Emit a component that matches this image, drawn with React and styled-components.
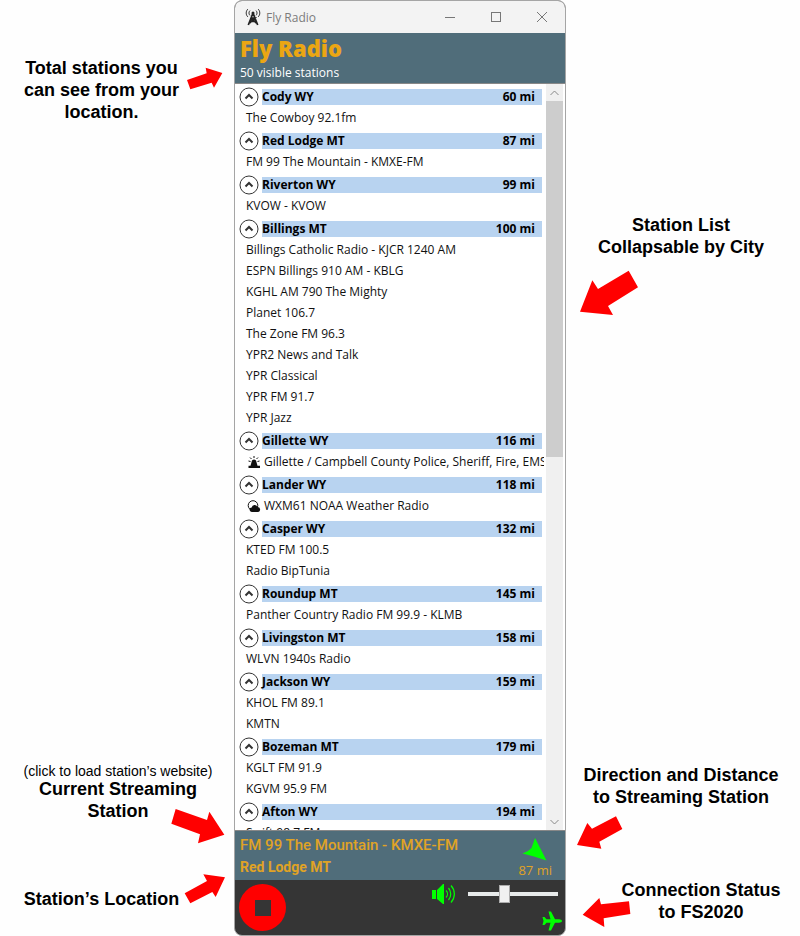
import { useState } from "react";
import styled, { createGlobalStyle } from "styled-components";

const cities = [
    { name: "Cody WY", distance: 60, stations: [{ name: "The Cowboy 92.1fm" }] },
    { name: "Red Lodge MT", distance: 87, stations: [{ name: "FM 99 The Mountain - KMXE-FM" }] },
    { name: "Riverton WY", distance: 99, stations: [{ name: "KVOW - KVOW" }] },
    {
        name: "Billings MT",
        distance: 100,
        stations: [
            { name: "Billings Catholic Radio - KJCR 1240 AM" },
            { name: "ESPN Billings 910 AM - KBLG" },
            { name: "KGHL AM 790 The Mighty" },
            { name: "Planet 106.7" },
            { name: "The Zone FM 96.3" },
            { name: "YPR2 News and Talk" },
            { name: "YPR Classical" },
            { name: "YPR FM 91.7" },
            { name: "YPR Jazz" },
        ],
    },
    {
        name: "Gillette WY",
        distance: 116,
        stations: [{ name: "Gillette / Campbell County Police, Sheriff, Fire, EMS &", icon: "siren" }],
    },
    { name: "Lander WY", distance: 118, stations: [{ name: "WXM61 NOAA Weather Radio", icon: "weather" }] },
    { name: "Casper WY", distance: 132, stations: [{ name: "KTED FM 100.5" }, { name: "Radio BipTunia" }] },
    { name: "Roundup MT", distance: 145, stations: [{ name: "Panther Country Radio FM 99.9 - KLMB" }] },
    { name: "Livingston MT", distance: 158, stations: [{ name: "WLVN 1940s Radio" }] },
    { name: "Jackson WY", distance: 159, stations: [{ name: "KHOL FM 89.1" }, { name: "KMTN" }] },
    { name: "Bozeman MT", distance: 179, stations: [{ name: "KGLT FM 91.9" }, { name: "KGVM 95.9 FM" }] },
    { name: "Afton WY", distance: 194, stations: [{ name: "Swift 98.7 FM" }] },
];

const TowerIcon = () => (
    <svg width="16" height="18" viewBox="0 0 16 18" fill="none" stroke="#222">
        <path d="M3 1C.6 3 .6 7 3 9M5 2.600C3.600 4 3.600 6 5 7.400M13 1c2.400 2 2.400 6 0 8M11 2.600c1.400 1.400 1.400 3.400 0 4.800" strokeWidth="0.9" />
        <circle cx="8" cy="5" r="1.500" fill="#222" stroke="none" />
        <path d="M8 5L3.300 17M8 5l4.700 12M6 10h4l-5.500 5M6 10l5.500 5M5 13.500h6" strokeWidth="1.700" />
    </svg>
);

const SirenIcon = () => (
    <svg width="14" height="14" viewBox="0 0 14 14" fill="#111">
        <path d="M3.500 10.800L5 5.500Q7 3.600 9 5.500l1.500 5.300zM1.500 10.800h11.500V13H1.500z" />
        <path d="M7 1v2M3 2.500l1.500 1.500M11 2.500L9.500 4M1.500 6l2 .5M12.500 6l-2 .5" stroke="#111" />
    </svg>
);

const WeatherIcon = () => (
    <svg width="14" height="14" viewBox="0 0 14 14">
        <circle cx="6" cy="6.500" r="4.800" fill="#fff" stroke="#111" />
        <path
            d="M5 13a2.300 2.300 0 0 1-.3-4.600 3 3 0 0 1 5.700-.5A2.600 2.600 0 0 1 11.200 13z"
            fill="#111"
        />
    </svg>
);

const stationIcons = { siren: SirenIcon, weather: WeatherIcon };

const Arrow = ({ viewBox, points, ...rest }) => {
    const [, , w, h] = viewBox.split(" ").map(Number);
    return (
        <ArrowSvg width={w / 3} height={h / 3} viewBox={viewBox} aria-hidden="true" {...rest}>
            <polygon points={points} fill="#f00" />
        </ArrowSvg>
    );
};

const City = ({ city }) => {
    const [open, setOpen] = useState(true);
    return (
        <section>
            <CityHeader>
                <Toggle
                    type="button"
                    aria-expanded={open}
                    aria-label={"Toggle " + city.name}
                    onClick={() => setOpen(!open)}
                >
                    <svg width="20" height="20" viewBox="0 0 20 20" fill="none" stroke="#333">
                        <circle cx="10" cy="10" r="9" />
                        <path d={open ? "M6.500 11.500L10 8l3.500 3.500" : "M6.500 8.500L10 12l3.500-3.500"} strokeWidth="2" />
                    </svg>
                </Toggle>
                <CityBar>
                    <span>{city.name}</span>
                    <span>{city.distance} mi</span>
                </CityBar>
            </CityHeader>
            {open && (
                <Stations>
                    {city.stations.map((station) => {
                        const Icon = stationIcons[station.icon];
                        return (
                            <Station key={station.name}>
                                {Icon && <Icon />}
                                {station.name}
                            </Station>
                        );
                    })}
                </Stations>
            )}
        </section>
    );
};

const App = () => {
    const [volume, setVolume] = useState(39);

    return (
        <Page>
            <GlobalStyle />
            <LeftNotes>
                <Callout>
                    <Note $align="start">
                        Total stations you
                        <br />
                        can see from your
                        <br />
                        location.
                    </Note>
                    <Arrow
                        $inset="10px 11px 0 0"
                        viewBox="561 81 108 69"
                        points="561,120 620,100 617,83 667,99 642,143 635,128 571,148"
                    />
                </Callout>
                <NoteGroup>
                    <Callout>
                        <Note $align="middle">
                            <Hint>(click to load station’s website)</Hint>
                            Current Streaming
                            <br />
                            Station
                        </Note>
                        <Arrow
                            $inset="45px 9px 0 0"
                            viewBox="513 171 162 105"
                            points="527,171 621,204 628,179 673,248 594,274 600,247 514,215"
                        />
                    </Callout>
                    <Callout>
                        <Note $align="start" $top={14}>
                            Station’s Location
                        </Note>
                        <Arrow
                            $inset="0 9px 0 0"
                            viewBox="552 372 123 90"
                            points="554,430 621,393 610,373 675,382 647,441 637,426 571,460"
                        />
                    </Callout>
                </NoteGroup>
            </LeftNotes>

            <Window>
                <TitleBar>
                    <TowerIcon />
                    <span>Fly Radio</span>
                    <WindowButton type="button" aria-label="Minimize">
                        <svg width="12" height="12" viewBox="0 0 12 12">
                            <path d="M1 6.500h10" />
                        </svg>
                    </WindowButton>
                    <WindowButton type="button" aria-label="Maximize">
                        <svg width="12" height="12" viewBox="0 0 12 12">
                            <rect x="1.500" y="1.500" width="9" height="9" />
                        </svg>
                    </WindowButton>
                    <WindowButton type="button" aria-label="Close">
                        <svg width="12" height="12" viewBox="0 0 12 12">
                            <path d="M1 1l10 10M11 1L1 11" />
                        </svg>
                    </WindowButton>
                </TitleBar>

                <Header>
                    <h1>Fly Radio</h1>
                    <p>50 visible stations</p>
                </Header>

                <ListArea>
                    <CityList>
                        {cities.map((city) => (
                            <City key={city.name} city={city} />
                        ))}
                    </CityList>
                    <ScrollBar>
                        <ScrollButton type="button" aria-label="Scroll up">
                            <svg width="9" height="6" viewBox="0 0 9 6">
                                <path d="M.5 5l4-4 4 4" />
                            </svg>
                        </ScrollButton>
                        <ScrollTrack>
                            <ScrollThumb />
                        </ScrollTrack>
                        <ScrollButton type="button" aria-label="Scroll down">
                            <svg width="9" height="6" viewBox="0 0 9 6">
                                <path d="M.5 1l4 4 4-4" />
                            </svg>
                        </ScrollButton>
                    </ScrollBar>
                </ListArea>

                <NowPlaying>
                    <div>
                        <StationLink href="#station">FM 99 The Mountain - KMXE-FM</StationLink>
                        <StationCity>Red Lodge MT</StationCity>
                    </div>
                    <Bearing>
                        <svg width="26" height="24" viewBox="0 0 26 24">
                            <path d="M13 0l11.500 22.500L12 18.500.5 15.500q5.500-1.500 9-5.500z" fill="#0f0" />
                        </svg>
                        87 mi
                    </Bearing>
                </NowPlaying>

                <Controls>
                    <StopButton type="button" aria-label="Stop" />
                    <Side>
                        <Volume>
                            <svg width="24" height="20" viewBox="0 0 24 20">
                                <path d="M0 6h4v9H0zM5 6l6-6h1v20h-1l-6-5z" fill="#0f0" />
                                <path
                                    d="M14 6.500c2 2 2 5 0 7M16.500 4c3 3.500 3 8.500 0 12M19 1.500c4.500 5 4.500 12 0 17"
                                    fill="none"
                                    stroke="#0f0"
                                    strokeWidth="1.200"
                                />
                            </svg>
                            <Slider
                                type="range"
                                aria-label="Volume"
                                value={volume}
                                onChange={(e) => setVolume(e.target.value)}
                            />
                        </Volume>
                        <svg width="20" height="20" viewBox="0 0 20 20" fill="#0f0" role="img" aria-label="Connected">
                            <path d="M20 10c0 1-1.500 1.700-3 1.700h-4L9 19.500H6.500L8.500 11.700H4.500L2.500 14H.5L1.500 10 .5 6h2l2 2.300h4L6.500.5H9l4 7.800h4c1.500 0 3 .7 3 1.700z" />
                        </svg>
                    </Side>
                </Controls>
            </Window>

            <RightNotes>
                <StackedCallout>
                    <Note>
                        Station List
                        <br />
                        Collapsable by City
                    </Note>
                    <Arrow
                        $inset="12px 0 0 14px"
                        viewBox="30 210 174 135"
                        points="176,212 204,262 114,318 129,345 30,335 67,241 84,267"
                    />
                </StackedCallout>
                <NoteGroup>
                    <StackedCallout>
                        <Note>
                            Direction and Distance
                            <br />
                            to Streaming Station
                        </Note>
                        <Arrow
                            $inset="8px 0 0 11px"
                            viewBox="21 201 138 99"
                            points="138,202 157,240 88,278 94,299 21,288 52,222 66,239"
                        />
                    </StackedCallout>
                    <Callout>
                        <Note $align="end">
                            Connection Status
                            <br />
                            to FS2020
                        </Note>
                        <Arrow
                            $left
                            $inset="19px 0 0 16px"
                            viewBox="36 444 147 87"
                            points="177,454 181,492 101,505 103,531 38,494 88,444 93,463"
                        />
                    </Callout>
                </NoteGroup>
            </RightNotes>
        </Page>
    );
};

const GlobalStyle = createGlobalStyle`
    * {
        box-sizing: border-box;
    }

    body {
        margin: 0;
        background: #fefefe;
        font-family: "Open Sans", "Noto Sans", sans-serif;
    }

    h1, p, ul {
        margin: 0;
        padding: 0;
    }

    button {
        display: grid;
        place-items: center;
        padding: 0;
        border: none;
        background: none;
    }

    svg {
        display: block;
        flex-shrink: 0;
    }
`;

const Page = styled.main`
    display: grid;
    grid-template-columns: 1fr 332px 1fr;
    height: 100vh;
`;

const Notes = styled.aside`
    display: flex;
    flex-direction: column;
    justify-content: space-between;
    font-family: "Liberation Sans", Arial, sans-serif;
    font-size: 18px;
    font-weight: 700;
    line-height: 22px;
    text-align: center;
    color: #000;
`;

const LeftNotes = styled(Notes)`
    padding: 57px 0 26px;
`;

const RightNotes = styled(Notes)`
    padding: 214px 0 9px;
`;

const NoteGroup = styled.div`
    display: flex;
    flex-direction: column;
    gap: 30px;
`;

/* text and arrow share one cell so that the arrow may reach under a line */
const Callout = styled.div`
    display: grid;

    > * {
        grid-area: 1 / 1;
    }
`;

const StackedCallout = styled.div`
    display: flex;
    flex-direction: column;
`;

const noteInsets = {
    start: "0 53px 0 22px",
    middle: "0 20px 0 22px",
    end: "0 16px 0 52px",
};

const Note = styled.p`
    margin: ${(props) => noteInsets[props.$align] || "0 16px 0 12px"};
    padding-top: ${(props) => props.$top || 0}px;
    white-space: nowrap;
`;

const Hint = styled.small`
    display: block;
    font-size: 14px;
    font-weight: 400;
    line-height: 14px;
`;

const ArrowSvg = styled.svg`
    justify-self: ${(props) => (props.$left ? "start" : "end")};
    margin: ${(props) => props.$inset};
`;

const Window = styled.div`
    display: flex;
    flex-direction: column;
    min-height: 0;
    border: 1px solid #a5a5a5;
    border-radius: 8px;
    background: #353535;
    overflow: hidden;
`;

const TitleBar = styled.div`
    display: flex;
    align-items: center;
    height: 32px;
    padding-left: 10px;
    background: #f3f3f3;
    color: #7c7c7c;
    font-size: 12px;

    span {
        flex-grow: 1;
        padding-left: 5px;
    }
`;

const WindowButton = styled.button`
    width: 46px;
    height: 30px;

    path,
    rect {
        fill: none;
        stroke: #777;
    }
`;

const Header = styled.header`
    padding: 1px 5px 0;
    background: #506d7a;
    border-bottom: 1px solid #888;

    h1 {
        font-size: 22px;
        font-weight: 800;
        line-height: 28px;
        color: #eba613;
    }

    p {
        font-size: 12px;
        line-height: 21px;
        color: #fff;
    }
`;

const ListArea = styled.div`
    display: flex;
    flex: 1;
    min-height: 0;
    padding-right: 2px;
    background: #fff;
    border-bottom: 1px solid #888;
`;

const CityList = styled.div`
    flex: 1;
    min-width: 0;
    margin-right: 2px;
    padding: 1px 0 0 4px;
    overflow-y: auto;
    scrollbar-width: none;
`;

const CityHeader = styled.div`
    display: flex;
    align-items: center;
    gap: 3px;
    height: 23px;
    padding-right: 2px;
`;

const Toggle = styled.button`
    width: 20px;
    height: 20px;
`;

const CityBar = styled.div`
    display: flex;
    flex: 1;
    justify-content: space-between;
    padding-right: 7px;
    background: #b8d3f0;
    font-size: 12px;
    font-weight: 700;
    line-height: 16px;
    color: #000;
`;

const Stations = styled.ul`
    list-style: none;
`;

const Station = styled.li`
    display: flex;
    align-items: center;
    gap: 3px;
    height: 21px;
    padding: 0 0 1px 7px;
    overflow: hidden;
    font-size: 12px;
    line-height: 16px;
    white-space: nowrap;
    color: #111;

    svg {
        margin-left: 1px;
    }
`;

const ScrollBar = styled.div`
    display: flex;
    flex-direction: column;
    width: 17px;
    background: #f0f0f0;
`;

const ScrollButton = styled.button`
    height: 17px;

    path {
        fill: none;
        stroke: #888;
    }
`;

const ScrollTrack = styled.div`
    flex: 1;
`;

const ScrollThumb = styled.div`
    height: 50%;
    background: #cdcdcd;
`;

const NowPlaying = styled.div`
    display: flex;
    justify-content: space-between;
    height: 49px;
    padding: 2px 13px 0 5px;
    background: #506d7a;
    font-family: Roboto, sans-serif;
    color: #e0a325;
`;

const StationLink = styled.a`
    display: block;
    font-size: 15px;
    font-weight: 500;
    line-height: 24px;
    color: inherit;
    text-decoration: none;
`;

const StationCity = styled.p`
    font-size: 14px;
    font-weight: 700;
    line-height: 20px;
`;

const Bearing = styled.div`
    display: flex;
    flex-direction: column;
    align-items: center;
    padding-top: 5px;
    font-family: "Open Sans", sans-serif;
    font-size: 13px;
    line-height: 16px;
`;

const Controls = styled.div`
    display: flex;
    justify-content: space-between;
    height: 55px;
    padding: 4px 3px 4px 4px;
`;

const StopButton = styled.button`
    width: 47px;
    height: 47px;
    border-radius: 50%;
    background: #f00;

    &::before {
        content: "";
        width: 16px;
        height: 16px;
        background: #353535;
    }
`;

const Side = styled.div`
    display: flex;
    flex-direction: column;
    align-items: flex-end;
    justify-content: space-between;
`;

const Volume = styled.div`
    display: flex;
    align-items: center;
    gap: 12px;
    padding-right: 4px;
`;

const Slider = styled.input`
    appearance: none;
    width: 90px;
    height: 18px;
    margin: 0;
    background: linear-gradient(#e7eaea, #e7eaea) center / 100% 4px no-repeat;

    &::-webkit-slider-thumb {
        appearance: none;
        width: 11px;
        height: 18px;
        border: 1px solid #acacac;
        background: #f0f0f0;
    }
`;

export default App;
